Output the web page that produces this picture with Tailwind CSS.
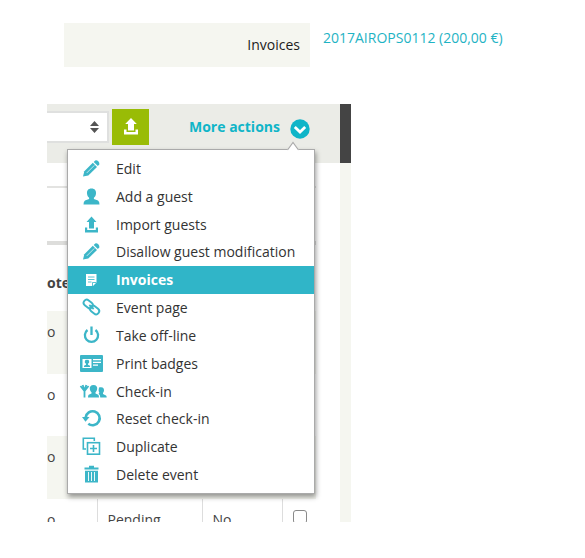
<!DOCTYPE html>
<html lang="en">
  <head>
    <meta charset="UTF-8" />
    <meta name="viewport" content="width=device-width, initial-scale=1.0" />
    <title>Event invoices</title>
    <script src="https://cdn.jsdelivr.net/npm/@tailwindcss/browser@4"></script>
  </head>

  <body class="bg-white font-['Open_Sans',sans-serif] text-sm text-[#333]">
    <!-- Invoice row -->
    <dl class="flex items-start pt-[23px] pl-16">
      <dt class="w-[246px] bg-[#f5f6f0] py-3 pr-[10px] text-right leading-5 text-[#1c1c1c]">Invoices</dt>
      <dd class="pt-[5px] pl-[13px] leading-5">
        <a href="#invoice" class="text-[#1fb3c4]">2017AIROPS0112 (200,00 €)</a>
      </dd>
    </dl>

    <!-- Guest list with the actions menu open -->
    <main class="relative mt-[37px] ml-[47px] w-[304px]">
      <header class="flex">
        <div class="flex h-[59px] flex-1 items-start bg-[#ebece7] pt-[5px]">
          <div class="relative mt-[2px] w-[62px]">
            <select aria-label="Guest list" class="block h-8 w-full appearance-none border-2 border-l-0 border-[#dfe0df] bg-white">
              <option></option>
            </select>
            <svg class="pointer-events-none absolute top-[10px] right-[10px]" width="9" height="12" viewBox="0 0 9 12" fill="#555"><path d="M4.500 0 9 5H0zM4.500 12 9 7H0z" /></svg>
          </div>
          <button type="button" aria-label="Export" class="ml-[3px] flex h-9 w-[37px] items-center justify-center bg-[#99bc06]">
            <svg width="16" height="18" viewBox="0 0 16 18" fill="#fff"><path d="M8 0 13.800 6H11V12.500H5V6H2.200zM1 11.500H3.500V14H12.500V11.500H15V16.500H1z" /></svg>
          </button>
          <button type="button" class="ml-10 flex h-9 items-center gap-[10px] font-bold whitespace-nowrap text-[#0fb5c8]">
            More actions
            <svg class="mt-1" width="20" height="20" viewBox="0 0 20 20"><circle cx="10" cy="10" r="9.700" fill="#0fb5c8" /><path d="M4.800 8l5.200 5 5.200-5" fill="none" stroke="#fff" stroke-width="2.800" /></svg>
          </button>
        </div>
        <div class="w-[11px] bg-[#444]"></div>
      </header>

      <div class="flex h-[359px] overflow-hidden">
        <div class="flex-1">
          <div class="h-[25px] w-[269px] border-b-2 border-[#e3e3e1]"></div>
          <div class="h-[57px] w-[269px] border-b-4 border-[#dddddb]"></div>
          <table class="w-[269px] table-fixed border-collapse text-left text-[#444]">
            <thead>
              <tr class="h-[66px] align-top">
                <th class="w-[50px] pt-[28px] leading-5">ote</th>
                <th class="w-[105px]"></th>
                <th class="w-20"></th>
                <th class="w-[34px]"></th>
              </tr>
            </thead>
            <tbody>
              <tr class="h-[63px] bg-[#f5f6f0] align-top"><td class="pt-[11px] leading-5">o</td><td></td><td></td><td></td></tr>
              <tr class="h-[62px] align-top"><td class="pt-[11px] leading-5">o</td><td></td><td></td><td></td></tr>
              <tr class="h-[63px] bg-[#f5f6f0] align-top"><td class="pt-[11px] leading-5">o</td><td></td><td></td><td></td></tr>
              <tr class="h-[63px] align-top">
                <td class="pt-[11px] leading-5">o</td>
                <td class="border-l border-[#ddd] pt-[11px] pl-[10px] leading-5">Pending</td>
                <td class="border-l border-[#ddd] pt-[11px] pl-[10px] leading-5">No</td>
                <td class="border-l border-[#ddd] pt-[11px] pl-[10px]"><input type="checkbox" aria-label="Select guest" class="block size-[14px] appearance-none rounded-[3px] border border-[#8a8a8a] bg-white" /></td>
              </tr>
            </tbody>
          </table>
        </div>
        <div class="w-[11px] bg-[#f5f6f0]"></div>
      </div>

      <!-- Dropdown -->
      <nav class="absolute top-[45px] left-5 w-[248px] border border-[#aaa] bg-white pt-[5px] pb-1 shadow-[1px_3px_5px_rgba(0,0,0,0.4)]">
        <svg class="absolute -top-[9px] right-[15px]" width="12" height="10" viewBox="0 0 12 10"><path d="M0 10V9L6 1.500 12 9V10z" fill="#fff" /><path d="M.5 9 6 1.500 11.500 9" fill="none" stroke="#aaa" stroke-width="1.200" /></svg>
        <ul class="flex h-[334px] flex-col text-[#333] *:flex-1">
          <li><a href="#edit" class="flex h-full items-center gap-2 pl-2">
            <svg width="32" height="20" viewBox="0 0 32 20" fill="#3cb6c8"><path d="M7 17.500 8.300 12.300 16.800 3.800 21 8 12.300 16.500z" /><path d="M17.700 2.900 19.200 1.500Q20.600.8 22.300 2.300 23.900 4 23.200 5.600L21.900 7.100z" /><path d="M10.800 13.900 18.300 6.400" stroke="#fff" stroke-width=".7" /></svg>
            Edit</a></li>
          <li><a href="#add" class="flex h-full items-center gap-2 pl-2">
            <svg width="32" height="20" viewBox="0 0 32 20" fill="#3cb6c8"><path d="M15.500 1.500C18.900 1.500 20.300 3.700 20 6.400 19.800 8.500 18.900 9.900 17.900 10.700V12L22 13.500Q23.500 14.300 23.500 17.500H7.500Q7.500 14.300 9 13.500L13.100 12V10.700C12.100 9.900 11.200 8.500 11 6.400 10.700 3.700 12.100 1.500 15.500 1.500z" /></svg>
            Add a guest</a></li>
          <li><a href="#import" class="flex h-full items-center gap-2 pl-2">
            <svg width="32" height="20" viewBox="0 0 32 20" fill="#3cb6c8"><path d="M15.500 1.500 20.500 7H18V13.500H13V7H10.500zM9 12.500H11.200V15H19.800V12.500H22V17.500H9z" /></svg>
            Import guests</a></li>
          <li><a href="#disallow" class="flex h-full items-center gap-2 pl-2 whitespace-nowrap">
            <svg width="32" height="20" viewBox="0 0 32 20" fill="#3cb6c8"><path d="M7 17.500 8.300 12.300 16.800 3.800 21 8 12.300 16.500z" /><path d="M17.700 2.900 19.200 1.500Q20.600.8 22.300 2.300 23.900 4 23.200 5.600L21.900 7.100z" /><path d="M10.800 13.900 18.300 6.400" stroke="#fff" stroke-width=".7" /></svg>
            Disallow guest modification</a></li>
          <li><a href="#invoices" class="flex h-full items-center gap-2 bg-[#30b5c8] pl-2 font-bold text-white">
            <svg width="32" height="20" viewBox="0 0 32 20" fill="#fff"><path d="M10 4H20.500V12.500L17 16H10z" /><path d="M12 7H18.500M12 9.500H18.500M12 12H15.500M16.500 16V12.500H20.500" fill="none" stroke="#30b5c8" stroke-width=".8" /></svg>
            Invoices</a></li>
          <li><a href="#page" class="flex h-full items-center gap-2 pl-2">
            <svg width="32" height="20" viewBox="0 0 32 20" fill="none" stroke="#3cb6c8" stroke-width="1.900"><rect x="-5" y="-3.100" width="10" height="6.200" rx="3.100" transform="translate(12.200 6) rotate(40)" /><rect x="-5" y="-3.100" width="10" height="6.200" rx="3.100" transform="translate(18.600 12) rotate(40)" /><path d="M13.300 7 17.700 11" /></svg>
            Event page</a></li>
          <li><a href="#offline" class="flex h-full items-center gap-2 pl-2">
            <svg width="32" height="20" viewBox="0 0 32 20" fill="none" stroke="#3cb6c8" stroke-width="2.300"><path d="M11.500 4A6.600 6.600 0 1 0 19.500 4M15.500 .5V9" /></svg>
            Take off-line</a></li>
          <li><a href="#badges" class="flex h-full items-center gap-2 pl-2">
            <svg width="32" height="20" viewBox="0 0 32 20"><rect x="4" y="1" width="23" height="17" rx="1" fill="#3cb6c8" /><path d="M6.500 5H15.500V14H6.500zM17 5H25V6.300H17zM17 7.700H25V9H17zM17 10.500H22V11.800H17z" fill="#fff" /><path d="M11 6A1.700 1.900 0 0 1 12 9.700V10.800L14 11.800V13H8V11.800L10 10.800V9.700A1.700 1.900 0 0 1 11 6z" fill="#3cb6c8" /></svg>
            Print badges</a></li>
          <li><a href="#checkin" class="flex h-full items-center gap-2 pl-2">
            <svg width="32" height="20" viewBox="0 0 32 20" fill="#3cb6c8"><path d="M4.500 4 8.500 9 12.500 4M6.700 3 8.500 8.500M10.300 3 8.500 8.500M8.500 7.500V15.500" fill="none" stroke="#3cb6c8" stroke-width="1.800" /><path d="M17.500 3C20.300 3 21.500 4.700 21.200 7 21 8.600 20.200 9.600 19.500 10.200V11.500L22.300 12.800Q23 13.300 23 15.500H12Q12 13.300 12.700 12.800L15.500 11.500V10.200C14.800 9.600 14 8.600 13.800 7 13.500 4.700 14.700 3 17.500 3z" /><path d="M23 5.500C26.800 4.200 28.800 6.500 27.800 9.500L27 11V12L30 13.500Q30.700 13.900 30.700 15.500H24.300Q24.300 13 22.600 11.800 24 11 22.800 9.500 22.400 8 23 5.500z" /></svg>
            Check-in</a></li>
          <li><a href="#reset" class="flex h-full items-center gap-2 pl-2">
            <svg width="32" height="20" viewBox="0 0 32 20"><path d="M9.700 8.500A7 7 0 1 1 12.300 14.700" fill="none" stroke="#3cb6c8" stroke-width="2.600" /><path d="M6 8H13.500L9.500 12.800z" fill="#3cb6c8" /></svg>
            Reset check-in</a></li>
          <li><a href="#duplicate" class="flex h-full items-center gap-2 pl-2">
            <svg width="32" height="20" viewBox="0 0 32 20" fill="none" stroke="#3cb6c8" stroke-width="1.600"><path d="M10 12H7.300V1.300H18.300V4" /><rect x="11.500" y="5.700" width="12" height="11.500" /><path d="M17.500 8V15M14 11.500H21" /></svg>
            Duplicate</a></li>
          <li><a href="#delete" class="flex h-full items-center gap-2 pl-2">
            <svg width="32" height="20" viewBox="0 0 32 20" fill="#3cb6c8"><path d="M8.500 2.500H13V.8H18V2.500H22.500V4.500H8.500zM9 5.800H22V17.500H9z" /><path d="M12.500 7V16M15.500 7V16M18.500 7V16" stroke="#fff" stroke-width=".9" /></svg>
            Delete event</a></li>
        </ul>
      </nav>
    </main>
  </body>
</html>
